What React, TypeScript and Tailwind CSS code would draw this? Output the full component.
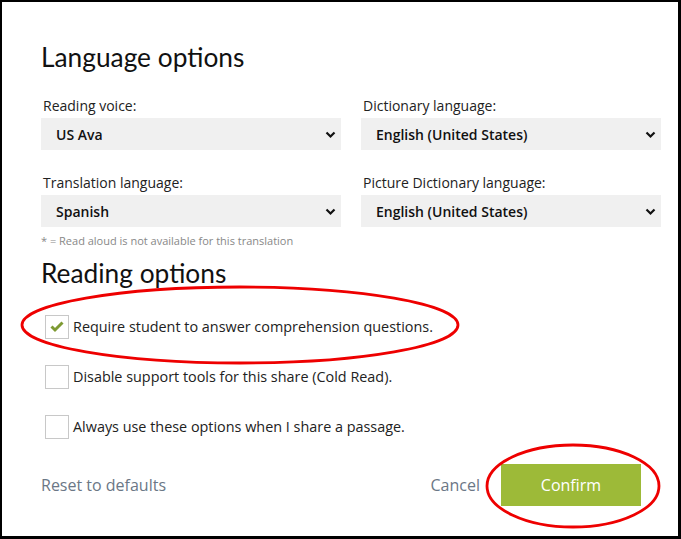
import { useState } from 'react';

const body = { fontFamily: '"Open Sans", "Liberation Sans", sans-serif' };
const heading = { fontFamily: 'Lato, "Open Sans", sans-serif' };

function Chevron() {
  return (
    <svg width="11" height="8" viewBox="0 0 11 8" className="pointer-events-none absolute right-[5px] top-[13px]">
      <path d="M1.5 1.5 L5.5 5.5 L9.5 1.5" fill="none" stroke="#111" strokeWidth="2.2" />
    </svg>
  );
}

function Field({ label, value }: { label: string; value: string }) {
  return (
    <div className="flex flex-col">
      <label className="text-[14px] text-[#222] leading-[20px] mb-[2px] pl-[2px]">{label}</label>
      <div className="relative h-[32px] bg-[#f0f0f0]">
        <select
          defaultValue={value}
          className="h-full w-full appearance-none bg-transparent pl-[15px] text-[14px] font-semibold text-[#111] outline-none"
          style={body}
        >
          <option>{value}</option>
        </select>
        <Chevron />
      </div>
    </div>
  );
}

function Check({ checked, label }: { checked: boolean; label: string }) {
  const [on, setOn] = useState(checked);
  return (
    <label className="flex items-center h-[24px] cursor-pointer" onClick={() => setOn(!on)}>
      <span className="ml-[4px] flex h-[24px] w-[24px] items-center justify-center border border-[#c8c8c8] bg-white">
        {on && (
          <svg width="16" height="13" viewBox="0 0 16 13">
            <path d="M2.5 6.5 L6 10 L13.5 2.5" fill="none" stroke="#7e9a33" strokeWidth="3" />
          </svg>
        )}
      </span>
      <span className="ml-[4px] text-[14.4px] text-[#222]">{label}</span>
    </label>
  );
}

export default function App() {
  return (
    <div
      className="relative w-[681px] h-[539px] bg-white border-l-2 border-t-2 border-r-[3px] border-b-[3px] border-black overflow-hidden"
      style={body}
    >
      <div className="pl-[39px] pr-[17px] pt-[37px]">
        <h2 className="text-[26.3px] leading-[36px] text-[#111]" style={heading}>Language options</h2>
        <div className="mt-[21px] grid grid-cols-2 gap-x-[20px] gap-y-[23px]">
          <Field label="Reading voice:" value="US Ava" />
          <Field label="Dictionary language:" value="English (United States)" />
          <Field label="Translation language:" value="Spanish" />
          <Field label="Picture Dictionary language:" value="English (United States)" />
        </div>
        <p className="mt-[6px] text-[11px] text-[#888]">* = Read aloud is not available for this translation</p>
        <h2 className="mt-[5px] text-[26.3px] leading-[36px] text-[#111]" style={heading}>Reading options</h2>
        <div className="mt-[24px] flex flex-col gap-[26px]">
          <Check checked label="Require student to answer comprehension questions." />
          <Check checked={false} label="Disable support tools for this share (Cold Read)." />
          <Check checked={false} label="Always use these options when I share a passage." />
        </div>
        <div className="mt-[25px] flex items-center">
          <button className="text-[16px] text-[#6b7786]">Reset to defaults</button>
          <button className="ml-auto text-[16px] text-[#6b7786]">Cancel</button>
          <button className="ml-[21px] mr-[20px] h-[42px] w-[140px] bg-[#9dba38] text-[16px] text-white">Confirm</button>
        </div>
      </div>
      <svg className="pointer-events-none absolute left-[-2px] top-[-2px]" width="681" height="539">
        <ellipse cx="240" cy="325" rx="218" ry="38" fill="none" stroke="#ee0000" strokeWidth="2.8" />
        <ellipse cx="573" cy="486" rx="86" ry="41" fill="none" stroke="#ee0000" strokeWidth="2.8" />
      </svg>
    </div>
  );
}
